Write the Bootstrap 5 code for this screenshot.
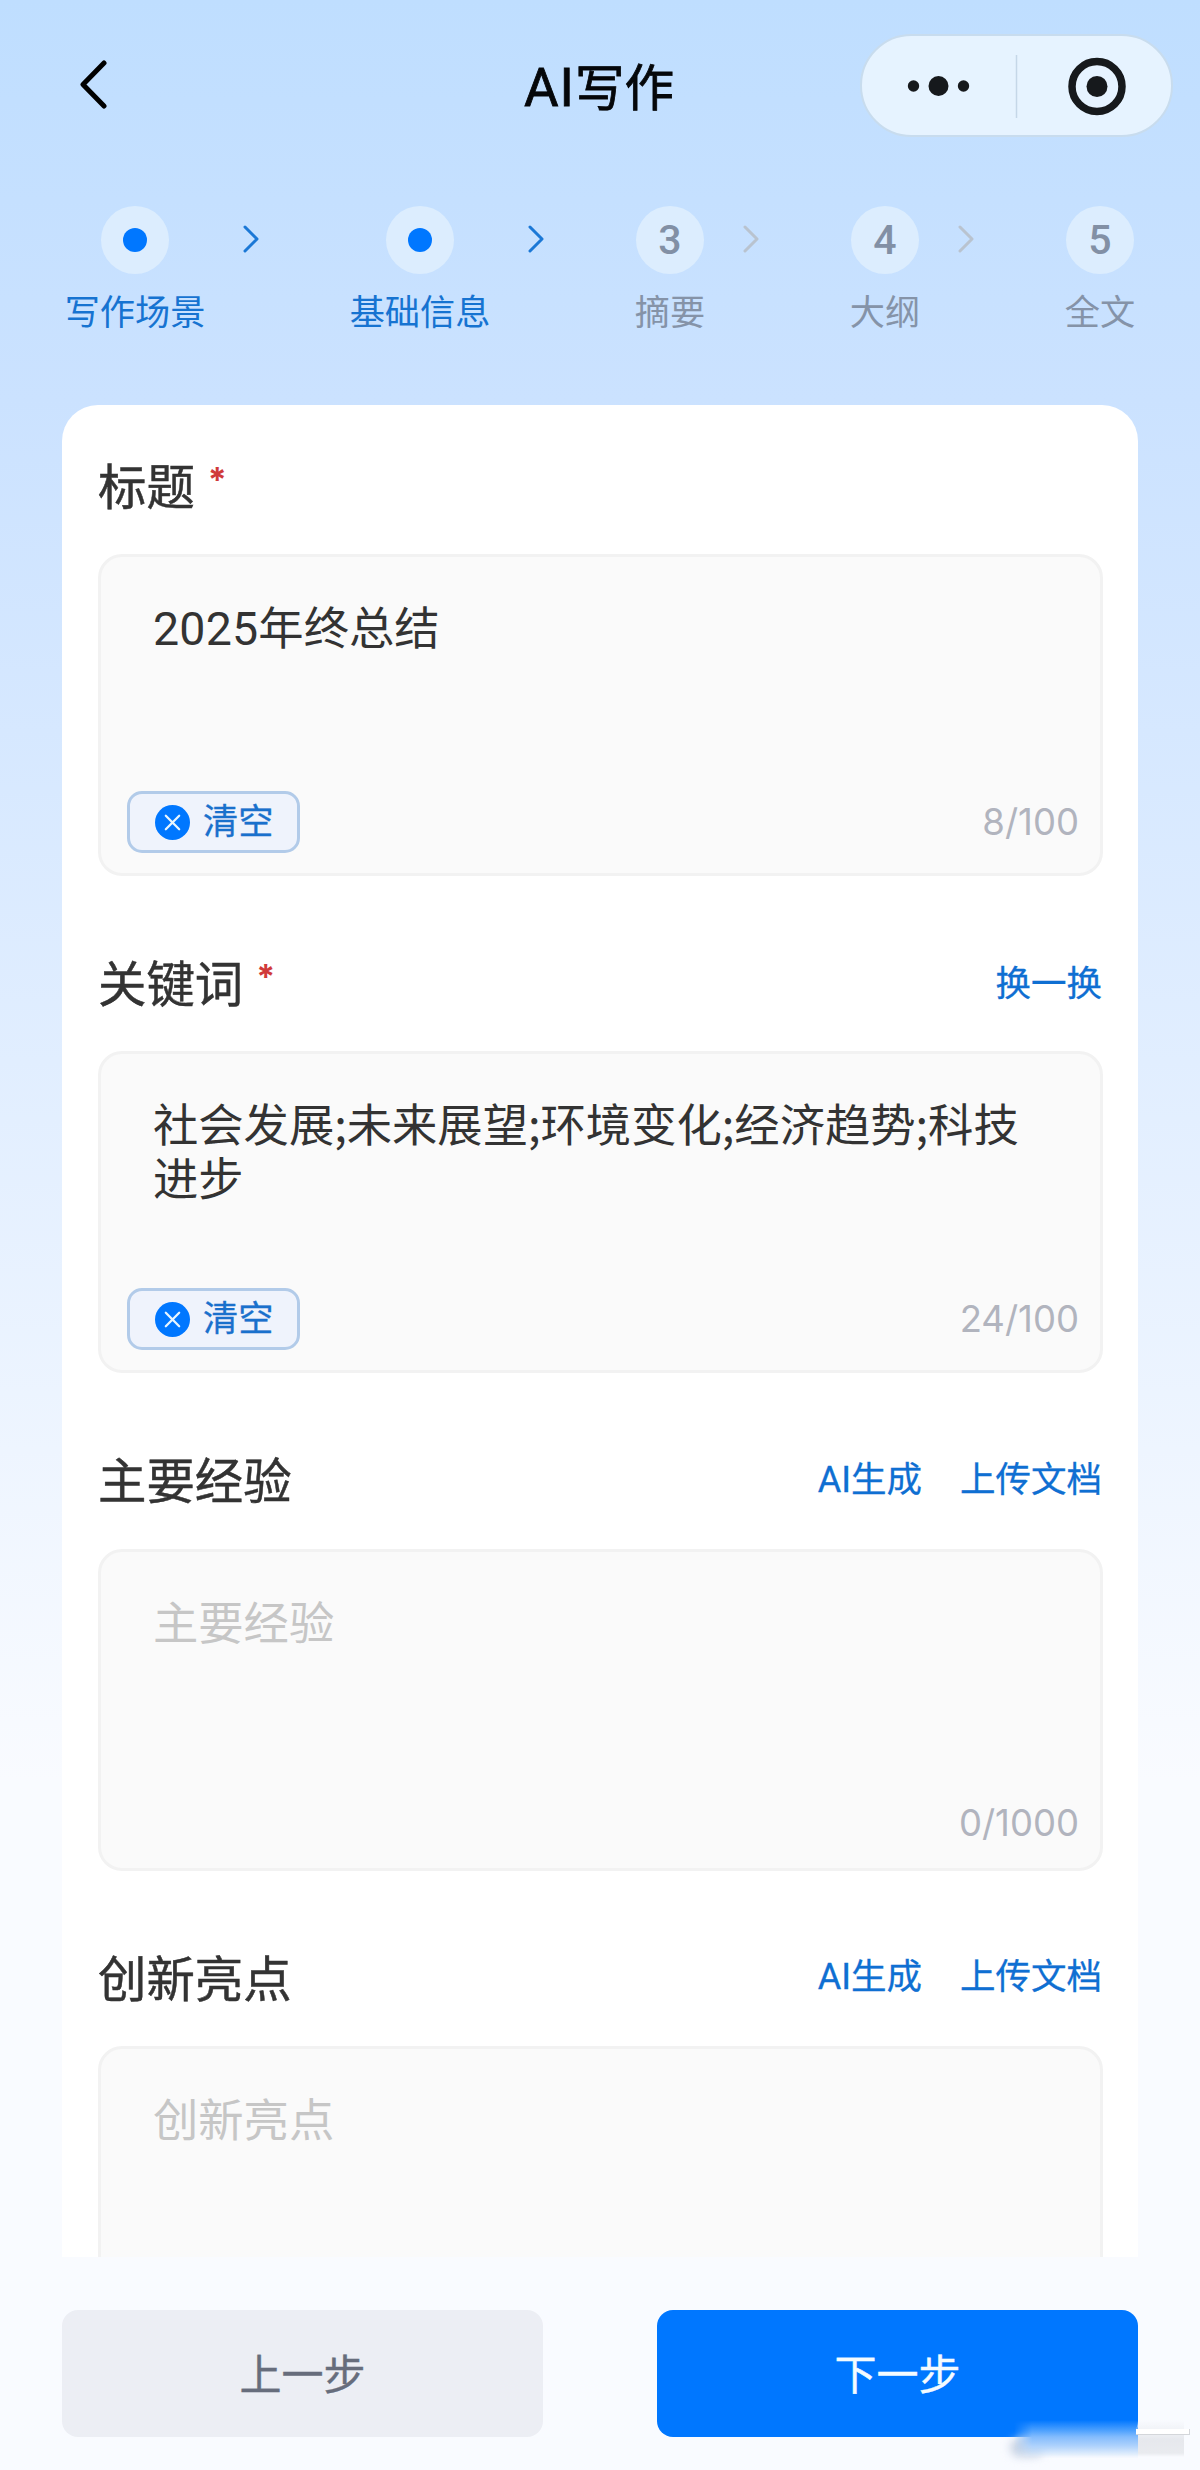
<!DOCTYPE html>
<html lang="zh-CN">
<head>
<meta charset="utf-8">
<meta name="viewport" content="width=device-width, initial-scale=1">
<title>AI写作</title>
<link rel="stylesheet" href="https://cdn.jsdelivr.net/npm/bootstrap@5.3.0/dist/css/bootstrap.min.css">
<style>
  body { font-family: "Noto Sans CJK SC", sans-serif; color: #333; background: #f9fbff; }
  .page { width: 1200px; height: 2470px; overflow: hidden; background: linear-gradient(180deg, #bfdeff 0, #cbe2ff 400px, #f9fbff 1780px); }
  .topbar { height: 172px; padding: 34px 27px 35px 79px; }
  .topbar svg { display: block; }
  .page-title { left: 524px; top: 47px; font-size: 49.5px; line-height: 76px; color: #05070a; font-weight: 400; -webkit-text-stroke: .8px #05070a; white-space: nowrap; }
  .latin { font-family: Roboto, sans-serif; }
  .page-title .latin { font-size: 53px; letter-spacing: 1px; }
  .capsule { width: 313px; height: 103px; border-radius: 52px; background: #e6f3ff; border: 2px solid #c8dcee; }
  .steps { height: 233px; padding: 34px 65px 0 65px; }
  .stage { width: 70px; }
  .stage.wide { width: 140px; }
  .bubble { width: 68px; height: 68px; background: #dcedfe; font: 500 41px/68px Roboto, sans-serif; color: #8290a5; text-align: center; }
  .bubble i { width: 24px; height: 24px; background: #0077ff; }
  .stage-name { font-size: 35.2px; line-height: 48px; margin-top: 12px; color: #8593a8; white-space: nowrap; }
  .done .stage-name { color: #1673d1; }
  .sep { width: 16px; margin: 19px 91px 0 38px; }
  .panel { margin: 0 62px; height: 1852px; border-radius: 36px 36px 0 0; padding: 0 35px 0 36px; overflow: hidden; }
  .field { height: 497.4px; }
  .field-head { height: 149px; padding: 8px 1px 0 0; }
  .field-name { font-size: 48.4px; line-height: 70px; font-weight: 400; -webkit-text-stroke: .5px #333; }
  .req { color: #d03a3a; font: 700 34px/62px Inter, sans-serif; margin-left: 13px; }
  .link-act { color: #0f6fd2; font-size: 35.5px; line-height: 70px; text-decoration: none; -webkit-text-stroke: .3px #0f6fd2; }
  .link-act .latin { font-size: 36px; }
  .acts { gap: 38px; }
  .box { height: 322px; background: #fafafa; border: 3px solid #f2f2f2; border-radius: 24px; padding: 0 21px 0 26px; }
  .value { height: 234px; padding: 42px 25px 0 26px; font-size: 45.3px; line-height: 53.5px; color: #333; }
  .value .latin { font-size: 46.5px; letter-spacing: .2px; }
  .value.empty { color: #c6c6c6; }
  .clear { width: 173px; height: 62px; border: 3px solid #b2cbe9; border-radius: 15px; background: #eff3fc; color: #1a70cc; font-size: 35.2px; line-height: 52px; padding: 0 0 0 25px; -webkit-text-stroke: .3px #1a70cc; }
  .clear span { margin: -7px 0 0 13px; }
  .count { font: 400 36.5px/62px Inter, sans-serif; color: #b1b4be; }
  .count.low { padding-top: 6px; }
  .foot { padding: 53px 62px 0; }
  .act { width: 481px; height: 127px; border: 0; border-radius: 16px; font-size: 42px; padding-bottom: 6px; }
  .act.prev { background: #eceef4; color: #676d7c; -webkit-text-stroke: .4px #676d7c; }
  .act.next { background: #0077ff; color: #f4fbff; -webkit-text-stroke: .4px #f4fbff; }
  /* softened stamp in the bottom right corner */
  .stamp { left: 1006px; top: 2420px; width: 188px; height: 40px; }
  .stamp .over { width: 132px; height: 38px; background: linear-gradient(180deg, rgba(120,183,254,0) 0, #4a9ffe 10px, #84bcfd 17px, #aed2fc 26px, rgba(216,232,250,.6) 35px, rgba(249,251,255,0) 38px); -webkit-mask-image: linear-gradient(90deg, transparent 8px, #000 26px); mask-image: linear-gradient(90deg, transparent 8px, #000 26px); }
  .stamp .tail { width: 46px; height: 37px; background: linear-gradient(180deg, rgba(240,241,245,0), #eff1f5 12px, #e6e8ed 20px, #e9ebef 33px, rgba(249,251,255,0)); }
  .stamp .blob { left: 4px; top: 18px; width: 34px; height: 19px; background: #c9d4e4; filter: blur(4px); }
  .stamp .gleam { left: 130px; top: 9px; width: 54px; height: 6px; background: #fff; border-bottom: 1px solid #d4d6da; border-right: 1px solid #d4d6da; filter: blur(.7px); }
</style>
</head>
<body>
<main class="page position-relative">
  <header class="topbar d-flex justify-content-between">
    <svg width="30" height="50" viewBox="0 0 30 50" style="margin-top:26px"><path d="M25 3 4 24.5 25 46" fill="none" stroke="#000" stroke-width="5" stroke-linecap="round" stroke-linejoin="round"/></svg>
    <h1 class="page-title position-absolute m-0"><span class="latin">AI</span>写作</h1>
    <svg class="capsule" viewBox="0 0 309 99"><g fill="#16191c"><circle cx="51.500" cy="50" r="5.700"/><circle cx="76.500" cy="50" r="10"/><circle cx="101.500" cy="50" r="5.700"/><circle cx="235" cy="50.500" r="10.500"/></g><circle cx="235" cy="50.500" r="25" fill="none" stroke="#16191c" stroke-width="7.500"/><path d="M154.500 19v63" stroke="#c5d7e8" stroke-width="1.500"/></svg>
  </header>

  <nav class="steps d-flex align-items-start">
    <div class="stage wide done d-flex flex-column align-items-center"><div class="bubble rounded-circle d-flex align-items-center justify-content-center"><i class="rounded-circle"></i></div><div class="stage-name">写作场景</div></div>
    <svg class="sep flex-shrink-0" height="28" viewBox="0 0 16 28"><path d="M2 2 14 14 2 26" fill="none" stroke="#1b78d6" stroke-width="3" stroke-linecap="round" stroke-linejoin="round"/></svg>
    <div class="stage wide done d-flex flex-column align-items-center"><div class="bubble rounded-circle d-flex align-items-center justify-content-center"><i class="rounded-circle"></i></div><div class="stage-name">基础信息</div></div>
    <svg class="sep flex-shrink-0" height="28" viewBox="0 0 16 28"><path d="M2 2 14 14 2 26" fill="none" stroke="#1b78d6" stroke-width="3" stroke-linecap="round" stroke-linejoin="round"/></svg>
    <div class="stage d-flex flex-column align-items-center"><div class="bubble rounded-circle">3</div><div class="stage-name">摘要</div></div>
    <svg class="sep flex-shrink-0" height="28" viewBox="0 0 16 28"><path d="M2 2 14 14 2 26" fill="none" stroke="#b9c3cf" stroke-width="3" stroke-linecap="round" stroke-linejoin="round"/></svg>
    <div class="stage d-flex flex-column align-items-center"><div class="bubble rounded-circle">4</div><div class="stage-name">大纲</div></div>
    <svg class="sep flex-shrink-0" height="28" viewBox="0 0 16 28"><path d="M2 2 14 14 2 26" fill="none" stroke="#b9c3cf" stroke-width="3" stroke-linecap="round" stroke-linejoin="round"/></svg>
    <div class="stage d-flex flex-column align-items-center"><div class="bubble rounded-circle">5</div><div class="stage-name">全文</div></div>
  </nav>

  <section class="panel bg-white">
    <div class="field">
      <div class="field-head d-flex align-items-center justify-content-between"><div class="d-flex"><span class="field-name">标题</span><span class="req">*</span></div></div>
      <div class="box">
        <div class="value"><span class="latin">2025</span>年终总结</div>
        <div class="d-flex justify-content-between"><button class="clear d-flex align-items-center"><svg width="35" height="35" viewBox="0 0 34 34"><circle cx="17" cy="17" r="17" fill="#0077ff"/><path d="m10.500 10.500 13 13m0-13-13 13" stroke="#e8f6ff" stroke-width="2.200" stroke-linecap="round"/></svg><span>清空</span></button><span class="count">8/100</span></div>
      </div>
    </div>
    <div class="field">
      <div class="field-head d-flex align-items-center justify-content-between"><div class="d-flex"><span class="field-name">关键词</span><span class="req">*</span></div><a class="link-act" href="#">换一换</a></div>
      <div class="box">
        <div class="value">社会发展;未来展望;环境变化;经济趋势;科技进步</div>
        <div class="d-flex justify-content-between"><button class="clear d-flex align-items-center"><svg width="35" height="35" viewBox="0 0 34 34"><circle cx="17" cy="17" r="17" fill="#0077ff"/><path d="m10.500 10.500 13 13m0-13-13 13" stroke="#e8f6ff" stroke-width="2.200" stroke-linecap="round"/></svg><span>清空</span></button><span class="count">24/100</span></div>
      </div>
    </div>
    <div class="field">
      <div class="field-head d-flex align-items-center justify-content-between"><span class="field-name">主要经验</span><div class="acts d-flex"><a class="link-act" href="#"><span class="latin">AI</span>生成</a><a class="link-act" href="#">上传文档</a></div></div>
      <div class="box">
        <div class="value empty">主要经验</div>
        <div class="d-flex justify-content-end"><span class="count low">0/1000</span></div>
      </div>
    </div>
    <div class="field">
      <div class="field-head d-flex align-items-center justify-content-between"><span class="field-name">创新亮点</span><div class="acts d-flex"><a class="link-act" href="#"><span class="latin">AI</span>生成</a><a class="link-act" href="#">上传文档</a></div></div>
      <div class="box">
        <div class="value empty">创新亮点</div>
      </div>
    </div>
  </section>

  <footer class="foot d-flex justify-content-between">
    <button class="act prev">上一步</button>
    <button class="act next">下一步</button>
  </footer>

  <div class="stamp position-absolute d-flex" aria-hidden="true">
    <div class="blob position-absolute rounded-pill"></div>
    <div class="over position-relative"></div>
    <div class="tail"></div>
    <div class="gleam position-absolute"></div>
  </div>
</main>
<script src="https://cdn.jsdelivr.net/npm/bootstrap@5.3.0/dist/js/bootstrap.bundle.min.js"></script>
</body>
</html>
